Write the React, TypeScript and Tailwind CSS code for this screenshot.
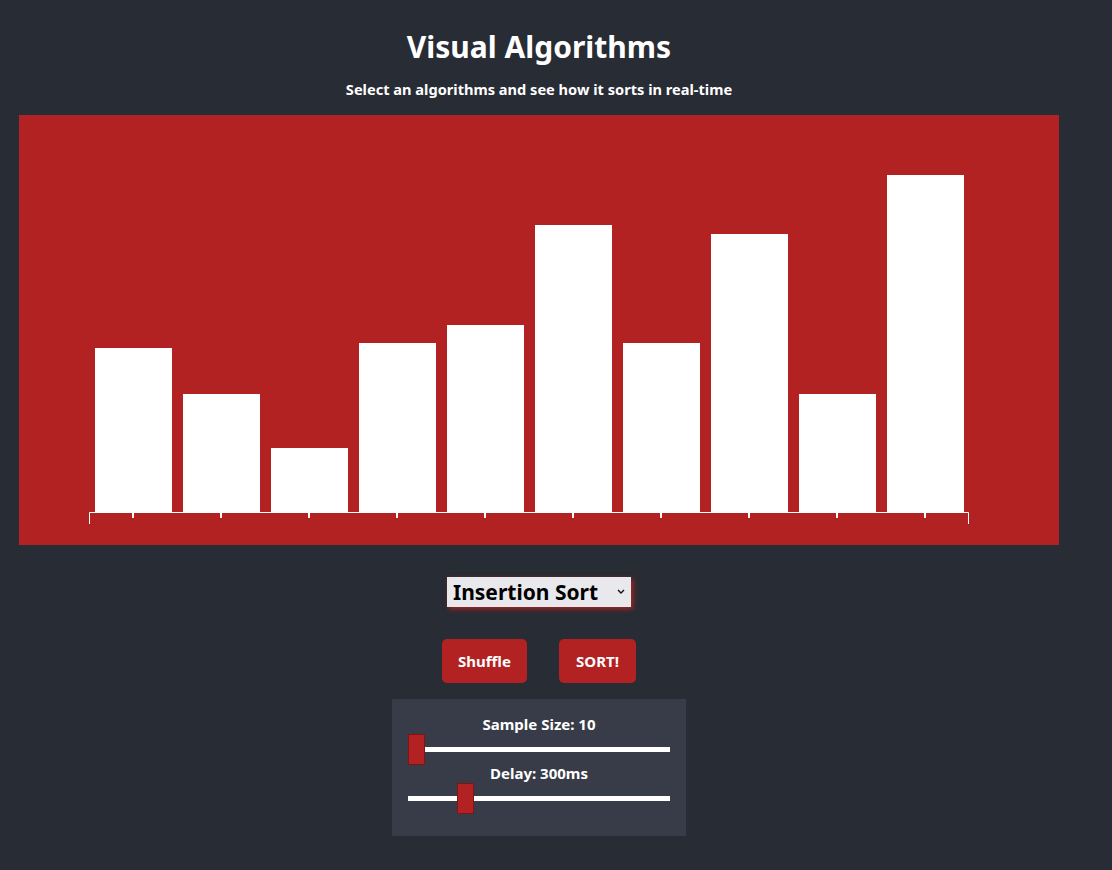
import React, { useState } from 'react';

const VALUES = [164, 118, 64, 169, 187, 287, 169, 278, 118, 337];

function BarChart({ values }: { values: number[] }) {
  const baseY = 397;
  const x0 = 70;
  const step = 88;
  const end = x0 + step * values.length;
  return (
    <svg width="1040" height="430" className="block">
      {values.map((v, i) => (
        <rect key={i} x={x0 + 6 + step * i} y={baseY - v} width={77} height={v} fill="#ffffff" />
      ))}
      <g stroke="#ffffff" fill="none">
        <path d={`M${x0 + 0.5},${baseY + 12}V${baseY + 0.5}H${end - 0.5}V${baseY + 12}`} strokeWidth={1} />
        {values.map((_, i) => (
          <line key={i} x1={x0 + 44 + step * i} x2={x0 + 44 + step * i} y1={baseY} y2={baseY + 6} strokeWidth={2} />
        ))}
      </g>
    </svg>
  );
}

function Slider({ label, value, min, max, onChange, className = '' }: { label: string; value: number; min: number; max: number; onChange: (v: number) => void; className?: string }) {
  return (
    <div className={`flex flex-col items-center ${className}`}>
      <span className="text-[15px] leading-[20px] font-bold">{label}</span>
      <input
        type="range"
        min={min}
        max={max}
        value={value}
        onChange={e => onChange(Number(e.target.value))}
        className="w-[262px] h-[31px] appearance-none bg-transparent cursor-pointer [&::-webkit-slider-runnable-track]:h-[5px] [&::-webkit-slider-runnable-track]:bg-white [&::-webkit-slider-thumb]:appearance-none [&::-webkit-slider-thumb]:box-border [&::-webkit-slider-thumb]:w-[17px] [&::-webkit-slider-thumb]:h-[31px] [&::-webkit-slider-thumb]:mt-[-13px] [&::-webkit-slider-thumb]:bg-[#b22222] [&::-webkit-slider-thumb]:border [&::-webkit-slider-thumb]:border-solid [&::-webkit-slider-thumb]:border-[#7f1515]"
      />
    </div>
  );
}

export default function App() {
  const [size, setSize] = useState(10);
  const [delay, setDelay] = useState(300);
  const [algo, setAlgo] = useState('insertion');

  return (
    <div className="min-h-screen bg-[#282c34] text-white font-['Noto_Sans',sans-serif]">
      <div className="w-[1078px] px-[19px] flex flex-col items-center">
        <h1 className="mt-[29px] text-[30px] leading-[36px] font-bold">Visual Algorithms</h1>
        <p className="mt-[14px] text-[14.6px] leading-[20px] font-bold">Select an algorithms and see how it sorts in real-time</p>

        <div className="mt-[16px] w-[1040px] h-[430px] bg-[#b22222]">
          <BarChart values={VALUES} />
        </div>

        <div className="relative mt-[32px] shadow-[2px_2px_5px_rgba(178,34,34,0.95)]">
          <select
            value={algo}
            onChange={e => setAlgo(e.target.value)}
            className="appearance-none w-[184px] h-[30px] pl-[6px] pr-[24px] bg-[#e9e8ed] text-black text-[21px] leading-[30px] font-bold outline-none"
          >
            <option value="bubble">Bubble Sort</option>
            <option value="insertion">Insertion Sort</option>
            <option value="selection">Selection Sort</option>
            <option value="merge">Merge Sort</option>
          </select>
          <svg className="absolute right-[6px] top-[12px] pointer-events-none" width="8" height="5" viewBox="0 0 8 5">
            <path d="M1 1l3 3 3-3" stroke="#111" strokeWidth="1.4" fill="none" />
          </svg>
        </div>

        <div className="mt-[32px] flex gap-[32px]">
          <button className="h-[44px] px-[16px] rounded-[5px] bg-[#b22222] text-[15px] font-bold">Shuffle</button>
          <button className="h-[44px] px-[17px] rounded-[5px] bg-[#b22222] text-[15px] font-bold">SORT!</button>
        </div>

        <div className="mt-[16px] w-[294px] pt-[15px] pb-[22px] px-[16px] bg-[#373c48] flex flex-col">
          <Slider label={`Sample Size: ${size}`} value={size} min={10} max={100} onChange={setSize} />
          <Slider label={`Delay: ${delay}ms`} value={delay} min={0} max={1500} onChange={setDelay} className="mt-[-2px]" />
        </div>
      </div>
    </div>
  );
}
